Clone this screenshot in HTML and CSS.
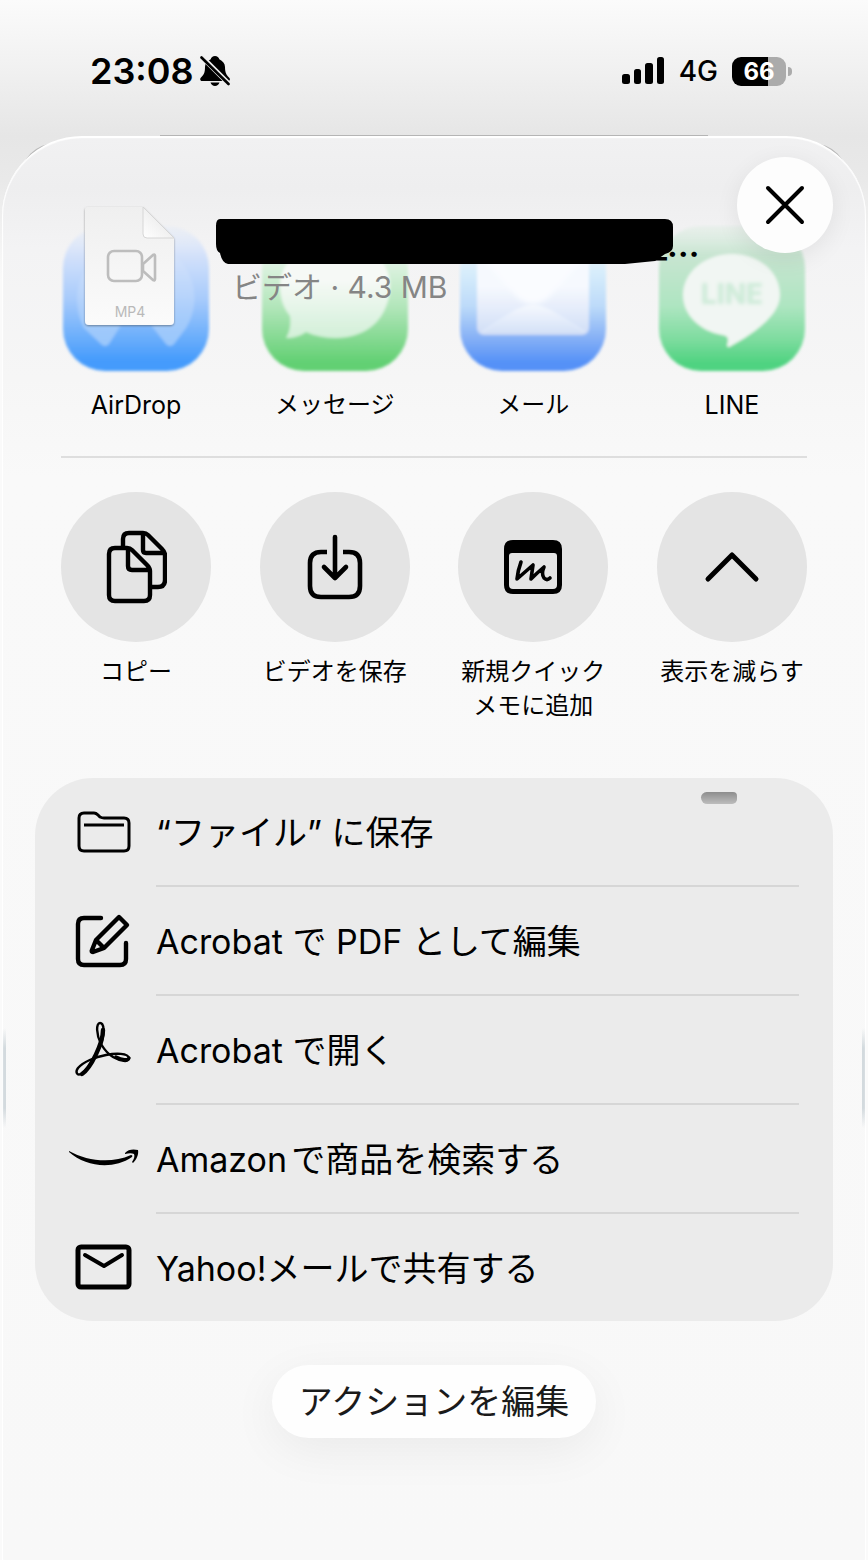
FILE: index.html
```html
<!DOCTYPE html>
<html lang="ja">
<head>
<meta charset="utf-8">
<meta name="viewport" content="width=device-width, initial-scale=1">
<title>共有</title>
<link rel="stylesheet" href="styles.css">
</head>
<body>
<header class="status">
  <div class="status-side">
    <time class="clock">23:08</time>
    <svg class="bell" width="30" height="32" viewBox="0 0 30 32" aria-hidden="true">
      <path d="M15 1c-2.200 0-4 1.300-4.300 3.200C7.200 5.800 5 8.500 5 12c0 6-1.300 7.700-4 10.500C-.5 24 .3 26 2 26h26c2 0 2.500-1.800 1.200-3.200C26.500 20 25 18 25 12c0-3.500-2.300-6.200-5.700-7.800C19 2.300 17.200 1 15 1zM10.500 27.500h9c-.8 2.200-2.300 3.500-4.500 3.500s-3.700-1.300-4.500-3.500z"/>
      <path d="M1 1 29 29" stroke="#f0f0f0" stroke-width="5"/>
      <path d="M1.500 2.500 28.500 29" stroke="#000" stroke-width="2.600" stroke-linecap="round"/>
    </svg>
  </div>
  <div class="status-side">
    <svg width="43" height="28" viewBox="0 0 43 28" aria-hidden="true">
      <rect x="0" y="17" width="8" height="10" rx="2.500"/><rect x="12" y="12" width="7" height="15" rx="2.500"/><rect x="23" y="6" width="8" height="21" rx="2.500"/><rect x="35" y="0" width="7" height="27" rx="2.500"/>
    </svg>
    <span class="network">4G</span>
    <span class="battery"><span class="battery-level">66</span><span class="battery-cap"></span></span>
  </div>
</header>

<main class="sheet">
  <section class="file">
    <svg class="file-icon" width="98" height="128" viewBox="0 0 98 128" aria-hidden="true">
      <defs>
        <linearGradient id="paper" x1="0" y1="0" x2="0" y2="1"><stop offset="0" stop-color="#efefef"/><stop offset="1" stop-color="#fbfbfb"/></linearGradient>
        <linearGradient id="fold" x1="1" y1="0" x2="0" y2="1"><stop offset=".5" stop-color="#f0f0f0"/><stop offset="1" stop-color="#fff"/></linearGradient>
        <filter id="lift" x="-10%" y="-10%" width="120%" height="120%"><feDropShadow dx="0" dy="1" stdDeviation="1.200" flood-opacity=".38"/></filter>
      </defs>
      <path d="M7 3h55l31 31v83q0 4-4 4H8q-4 0-4-4V6q0-3 3-3z" fill="url(#paper)" filter="url(#lift)"/>
      <path d="M62 3v27q0 4 4 4h27z" fill="url(#fold)" stroke="#d6d6d6" stroke-width="1"/>
      <rect x="27" y="47" width="34" height="30" rx="6" fill="none" stroke="#bdbdbd" stroke-width="2.600"/>
      <path d="M62 60 72 51q2-1 2 1v23q0 2-2 1l-10-9z" fill="none" stroke="#bdbdbd" stroke-width="2.600" stroke-linejoin="round"/>
      <text class="file-type" x="49" y="113" text-anchor="middle">MP4</text>
    </svg>
    <div class="file-info">
      <h1 class="file-name">
        <svg class="redaction" width="460" height="48" viewBox="0 0 460 48" aria-hidden="true"><path d="M5 1H450q8 0 8 8v19q0 6-8 8l-10 7-30 3H13q-6-1-8-11-4-2-4-9V8q0-7 4-7z"/></svg>
        <span class="file-tail">_…</span>
      </h1>
      <p class="file-meta">ビデオ · 4.3 MB</p>
    </div>
    <button class="close" type="button" aria-label="閉じる">
      <svg width="40" height="40" viewBox="0 0 40 40" aria-hidden="true"><path d="M3 3 37 37M37 3 3 37" fill="none" stroke="#000" stroke-width="4" stroke-linecap="round"/></svg>
    </button>
  </section>

  <nav class="tiles apps" aria-label="アプリ">
    <a class="tile" href="#airdrop">
      <svg class="app-icon" width="150" height="150" viewBox="0 0 150 150" aria-hidden="true">
        <defs>
          <linearGradient id="blue" x1="0" y1="0" x2="0" y2="1"><stop offset="0" stop-color="#dce7fb" stop-opacity=".2"/><stop offset=".2" stop-color="#d3e1fa"/><stop offset=".5" stop-color="#a8cbfb"/><stop offset=".75" stop-color="#6fb0fb"/><stop offset=".93" stop-color="#459bfc"/></linearGradient>
          <linearGradient id="rings" x1="0" y1="0" x2="0" y2="1"><stop offset="0" stop-color="#fff" stop-opacity="0"/><stop offset=".6" stop-color="#d6e6fc" stop-opacity=".3"/><stop offset="1" stop-color="#d6e6fc" stop-opacity=".5"/></linearGradient>
          <filter id="soft" x="-5%" y="-5%" width="110%" height="110%"><feGaussianBlur stdDeviation="1.500"/></filter>
          <filter id="softer" x="-15%" y="-15%" width="130%" height="130%"><feGaussianBlur stdDeviation="2.500"/></filter>
        </defs>
        <g filter="url(#soft)">
          <rect x="2" y="2" width="146" height="145" rx="42" fill="url(#blue)"/>
          <path d="M23 104C6 72 20 20 75 20s70 52 50 84l-12 16q-4 4-8 0L90 101H60l-12 19q-4 4-8 0z" fill="url(#rings)"/>
        </g>
      </svg>
      <span class="label label-latin">AirDrop</span>
    </a>
    <a class="tile" href="#messages">
      <svg class="app-icon" width="150" height="150" viewBox="0 0 150 150" aria-hidden="true">
        <defs><linearGradient id="green" x1="0" y1="0" x2="0" y2="1"><stop offset="0" stop-color="#f0f5f1" stop-opacity="0"/><stop offset=".3" stop-color="#d8f1dc"/><stop offset=".55" stop-color="#b3e6bb"/><stop offset=".78" stop-color="#84d991"/><stop offset=".94" stop-color="#62d073"/></linearGradient>
        <linearGradient id="bubble" x1="0" y1="0" x2="0" y2="1"><stop offset=".4" stop-color="#f6f9f6"/><stop offset="1" stop-color="#d2f0d8"/></linearGradient></defs>
        <g filter="url(#soft)">
          <rect x="2" y="2" width="146" height="145" rx="42" fill="url(#green)"/>
          <path d="M76 18c-34 0-56 20-56 43 0 15 4 23 10 31 1 9 0 15-4 22 8 0 14-2 20-6 9 4 19 6 30 6 33 0 54-22 54-53 0-23-20-43-54-43z" fill="url(#bubble)"/>
        </g>
      </svg>
      <span class="label">メッセージ</span>
    </a>
    <a class="tile" href="#mail">
      <svg class="app-icon" width="150" height="150" viewBox="0 0 150 150" aria-hidden="true">
        <defs><linearGradient id="mailblue" x1="0" y1="0" x2="0" y2="1"><stop offset="0" stop-color="#f2f4f8" stop-opacity="0"/><stop offset=".3" stop-color="#d9eefb"/><stop offset=".55" stop-color="#bddbf9"/><stop offset=".78" stop-color="#84aff6"/><stop offset=".94" stop-color="#5591f7"/></linearGradient>
        <linearGradient id="envelope" x1="0" y1="0" x2="0" y2="1"><stop offset=".4" stop-color="#f6f9fe"/><stop offset="1" stop-color="#d0ddf6"/></linearGradient>
        <linearGradient id="flap" x1="0" y1="0" x2="0" y2="1"><stop offset="0" stop-color="#f6f9fe"/><stop offset="1" stop-color="#d6e2f7"/></linearGradient></defs>
        <g filter="url(#soft)">
          <rect x="2" y="2" width="146" height="145" rx="42" fill="url(#mailblue)"/>
          <rect x="19" y="30" width="112" height="81" rx="7" fill="url(#envelope)"/>
          <path d="M24 108 58 85q17-9 34 0l35 23" fill="url(#flap)" stroke="#e6effd" stroke-width="1"/>
          <path d="M22 32 60 74q15 12 30 0l38-42z" fill="#fafcff" filter="url(#softer)"/>
        </g>
      </svg>
      <span class="label">メール</span>
    </a>
    <a class="tile" href="#line">
      <svg class="app-icon" width="150" height="150" viewBox="0 0 150 150" aria-hidden="true">
        <defs><linearGradient id="linegreen" x1="0" y1="0" x2="0" y2="1"><stop offset="0" stop-color="#d4eadb" stop-opacity=".3"/><stop offset=".2" stop-color="#c8e5d1"/><stop offset=".55" stop-color="#aee5c1"/><stop offset=".78" stop-color="#7edc9f"/><stop offset=".94" stop-color="#50d381"/></linearGradient></defs>
        <g filter="url(#soft)">
          <rect x="2" y="2" width="146" height="145" rx="42" fill="url(#linegreen)"/>
          <path d="M75 30c-27 0-49 18-49 41 0 20 17 36 39 40 6 1 7 3 5 10 0 2 2 3 4 1 18-10 49-29 49-51 0-23-21-41-48-41z" fill="#f1f6f3"/>
          <text class="line-mark" x="75" y="80" text-anchor="middle" filter="url(#soft)">LINE</text>
        </g>
      </svg>
      <span class="label label-latin">LINE</span>
    </a>
  </nav>

  <hr class="rule">

  <div class="tiles">
    <button class="tile" type="button">
      <span class="disc"><svg width="62" height="76" viewBox="0 0 62 76" fill="none" stroke="#000" stroke-width="4.400" stroke-linejoin="round" aria-hidden="true">
        <path d="M18 18V10q0-6 6-6h14q3 0 5 2l14 14q3 3 3 6v25q0 7-7 7h-7M38 4v17q0 3 3 3h18"/>
        <path d="M10 19h12q3 0 5 2l15 15q3 3 3 6v24q0 6-6 6H10q-6 0-6-6V25q0-6 6-6zM23 19v18q0 4 4 4h17"/>
      </svg></span>
      <span class="label">コピー</span>
    </button>
    <button class="tile" type="button">
      <span class="disc"><svg width="56" height="68" viewBox="0 0 56 68" fill="none" stroke="#000" stroke-width="4.600" aria-hidden="true">
        <path d="M20 19h-6q-11 0-11 11v23q0 11 11 11h28q11 0 11-11V30q0-11-11-11h-6"/><path d="M28 4v40M17 34l11 11 11-11" stroke-linecap="round" stroke-linejoin="round"/>
      </svg></span>
      <span class="label">ビデオを保存</span>
    </button>
    <button class="tile" type="button">
      <span class="disc"><svg width="58" height="54" viewBox="0 0 58 54" aria-hidden="true">
        <path fill-rule="evenodd" d="M9 0h40q9 0 9 9v36q0 9-9 9H9q-9 0-9-9V9q0-9 9-9zM8 13q-3 0-3 3v29q0 4 4 4h40q4 0 4-4V16q0-3-3-3z"/>
        <path d="M17 22Q14 30 13 39q8-7 16-14l-2 14q6-6 13-12-3 7 0 11 3 3 6 0" fill="none" stroke="#000" stroke-width="3.600" stroke-linecap="round" stroke-linejoin="round"/>
      </svg></span>
      <span class="label">新規クイックメモに追加</span>
    </button>
    <button class="tile" type="button">
      <span class="disc"><svg width="56" height="32" viewBox="0 0 56 32" aria-hidden="true"><path d="M4 28 28 4l24 24" fill="none" stroke="#000" stroke-width="5" stroke-linecap="round" stroke-linejoin="round"/></svg></span>
      <span class="label">表示を減らす</span>
    </button>
  </div>

  <ul class="actions">
    <li><button class="action" type="button">
      <svg class="action-icon" viewBox="2 1 72 60" fill="none" stroke="#000" stroke-width="3" aria-hidden="true"><path d="M17 11h10q2 0 4 2l2 2q2 1 4 1h20q5 0 5 5v23q0 5-5 5H17q-5 0-5-5V16q0-5 5-5zM17 23h40"/></svg>
      <span class="action-text">“ファイル” に保存</span>
    </button><span class="smudge"></span></li>
    <li><button class="action" type="button">
      <svg class="action-icon" viewBox="2 1 72 60" fill="none" stroke="#000" stroke-width="4.400" stroke-linecap="round" stroke-linejoin="round" aria-hidden="true"><path d="M34 7H17q-6 0-6 6v35q0 6 6 6h36q6 0 6-6V32"/><path d="m52 6 8 8-23 23-11 4q-2 0-1-2l4-10zM29 29l8 8"/></svg>
      <span class="action-text">Acrobat で PDF として編集</span>
    </button></li>
    <li><button class="action" type="button">
      <svg class="action-icon" viewBox="2 1 72 60" fill="none" stroke="#000" stroke-width="2.400" stroke-linecap="round" stroke-linejoin="round" aria-hidden="true"><path d="M34 24C29 14 29 3 33 3s5 9 1 21C29 36 20 51 14 54c-4 2-6-2-3-6 5-6 17-11 28-13 10-2 22-2 23 3 0 5-9 3-16-1-5-3-9-8-12-13z"/><path d="M36 10C36 23 24 48 15 54" stroke-width="4.400"/><path d="M49 37c6 3 12 4 13 1" stroke-width="3.400"/></svg>
      <span class="action-text">Acrobat で開く</span>
    </button></li>
    <li><button class="action" type="button">
      <svg class="action-icon" viewBox="2 1 72 60" aria-hidden="true"><path d="M2 22C20 32 44 35 64 26q2 0 1 2C46 41 19 38 2 23z"/><path d="M58 24c3-4 9-4 13-3 1 5-2 10-5 13l-1-1c2-3 3-6 2-8-2-1-5-1-9 0z"/></svg>
      <span class="action-text">Amazonで商品を検索する</span>
    </button></li>
    <li><button class="action" type="button">
      <svg class="action-icon" viewBox="2 1 72 60" fill="none" stroke="#000" aria-hidden="true"><rect x="11" y="10" width="51" height="40" rx="3" stroke-width="5"/><path d="M18 18 37 29 55 18" stroke-width="4" stroke-linecap="round" stroke-linejoin="round"/></svg>
      <span class="action-text">Yahoo!メールで共有する</span>
    </button></li>
  </ul>

  <button class="edit" type="button">アクションを編集</button>
</main>
</body>
</html>
```
FILE: styles.css
```css
*, *::before, *::after { box-sizing: border-box; }

body {
  margin: 0;
  min-height: 100vh;
  display: flex;
  flex-direction: column;
  background: linear-gradient(#fbfbfb 0, #f2f2f2 60px, #e6e6e6 136px, #e9e9e9 180px, #fafafa 280px, #fafafa 100%);
  color: #000;
  font-family: Inter, "Noto Sans CJK JP", sans-serif;
  text-autospace: normal;
}

button {
  border: 0;
  padding: 0;
  margin: 0;
  background: none;
  color: inherit;
  font: inherit;
  cursor: pointer;
}

a { color: inherit; text-decoration: none; }
svg { display: block; flex: none; }

.status {
  height: 136px;
  padding: 6px 76px 0 90px;
  display: flex;
  justify-content: space-between;
  align-items: center;
}
.status-side { display: flex; align-items: center; gap: 14px; }
.status-side:first-child { gap: 6px; }
.clock { font-size: 36px; line-height: 40px; font-weight: 600; }
.network { font-size: 28px; line-height: 32px; font-weight: 500; }

.battery { display: flex; align-items: center; gap: 2px; }
.battery-level {
  width: 54px;
  height: 29px;
  border-radius: 9px;
  background: linear-gradient(90deg, #000 66%, #ababab 66%);
  color: #fff;
  font-size: 24px;
  line-height: 29px;
  font-weight: 700;
  text-align: center;
}
.battery-cap { width: 4px; height: 9px; border-radius: 0 5px 5px 0; background: #ababab; }

.sheet {
  position: relative;
  flex: 1;
  margin: 0 2px;
  padding: 86px 33px 60px;
  display: flex;
  flex-direction: column;
  border-top: 2px solid #fff;
  border-radius: 80px 80px 0 0;
  background:
    linear-gradient(transparent, #d3dade 20%, #d3dade 80%, transparent) 0 890px / 4px 100px no-repeat,
    linear-gradient(transparent, #d3dade 20%, #d3dade 80%, transparent) 100% 890px / 4px 100px no-repeat,
    linear-gradient(#f1f1f2 0, #eeeeef 50px, #f3f3f4 110px, #f6f6f6 240px, #f9f9f9 340px, #f8f8f8 100%);
  box-shadow: inset 1px 0 1px #fff, inset -1px 0 1px #fff;
}
/* edges of the cards stacked behind the sheet */
.sheet::before {
  content: "";
  position: absolute;
  z-index: -1;
  top: 5px;
  left: 18px;
  right: 18px;
  height: 80px;
  border-radius: 36px;
  background: #b9b9b9;
}
.sheet::after {
  content: "";
  position: absolute;
  top: -3px;
  left: 158px;
  right: 158px;
  height: 1px;
  background: #b5b5b5;
}

.file {
  position: absolute;
  z-index: 1;
  top: 19px;
  left: 79px;
  right: 33px;
  display: flex;
  align-items: flex-start;
}
.file-icon { margin-top: 47px; }
.file-type { fill: #b9b9b9; font-size: 14px; }
.file-info { flex: 1; min-width: 0; margin: 61px 0 0 36px; }
.file-name {
  margin: 0;
  display: flex;
  height: 48px;
  font-size: 34px;
  line-height: 54px;
  font-weight: 600;
}
.file-tail { margin-left: -24px; }
.file-meta { margin: 0 0 0 17px; color: #858585; font-size: 30px; line-height: 42px; }

.close {
  flex: none;
  width: 96px;
  height: 96px;
  display: grid;
  place-items: center;
  border-radius: 50%;
  background: #fdfdfd;
  box-shadow: 0 6px 24px rgba(0, 0, 0, .07);
}

.tiles { display: flex; justify-content: space-between; margin: 0 26px; }
.tile {
  width: 150px;
  display: flex;
  flex-direction: column;
  align-items: center;
  gap: 13px;
}
.apps .tile { gap: 14px; }
.label { font-size: 24px; line-height: 34px; text-align: center; }
.label-latin { font-size: 25px; }
.line-mark { fill: #cdebd8; font-size: 28px; font-weight: 800; }

.rule {
  width: auto;
  height: 2px;
  margin: 34px 26px;
  border: 0;
  background: #dedede;
}

.disc {
  width: 150px;
  height: 150px;
  display: grid;
  place-items: center;
  border-radius: 50%;
  background: #e4e4e4;
}

.actions {
  list-style: none;
  margin: 55px 0 44px;
  padding: 0 34px;
  border-radius: 58px;
  background: #ebebeb;
}
.actions li { position: relative; }
.action {
  width: 100%;
  display: flex;
  align-items: center;
  gap: 15px;
  text-align: left;
}
.action-icon { width: 72px; height: 60px; }
.action-text {
  flex: 1;
  padding: 30px 0 27px;
  border-bottom: 2px solid #d6d6d6;
  font-size: 34px;
  line-height: 50px;
}
.actions li:last-child .action-text { border-bottom: 0; }

/* pen mark over the first row */
.smudge {
  position: absolute;
  top: 14px;
  right: 62px;
  width: 36px;
  height: 12px;
  border-radius: 7px 5px 6px 8px;
  background: linear-gradient(#8d8d8d, #bdbdbd);
}

.edit {
  align-self: center;
  padding: 12px 27px 11px;
  border-radius: 37px;
  background: #fefefe;
  box-shadow: 0 12px 48px rgba(0, 0, 0, .06);
  color: #1a1a1a;
  font-size: 34px;
  line-height: 50px;
}
```
